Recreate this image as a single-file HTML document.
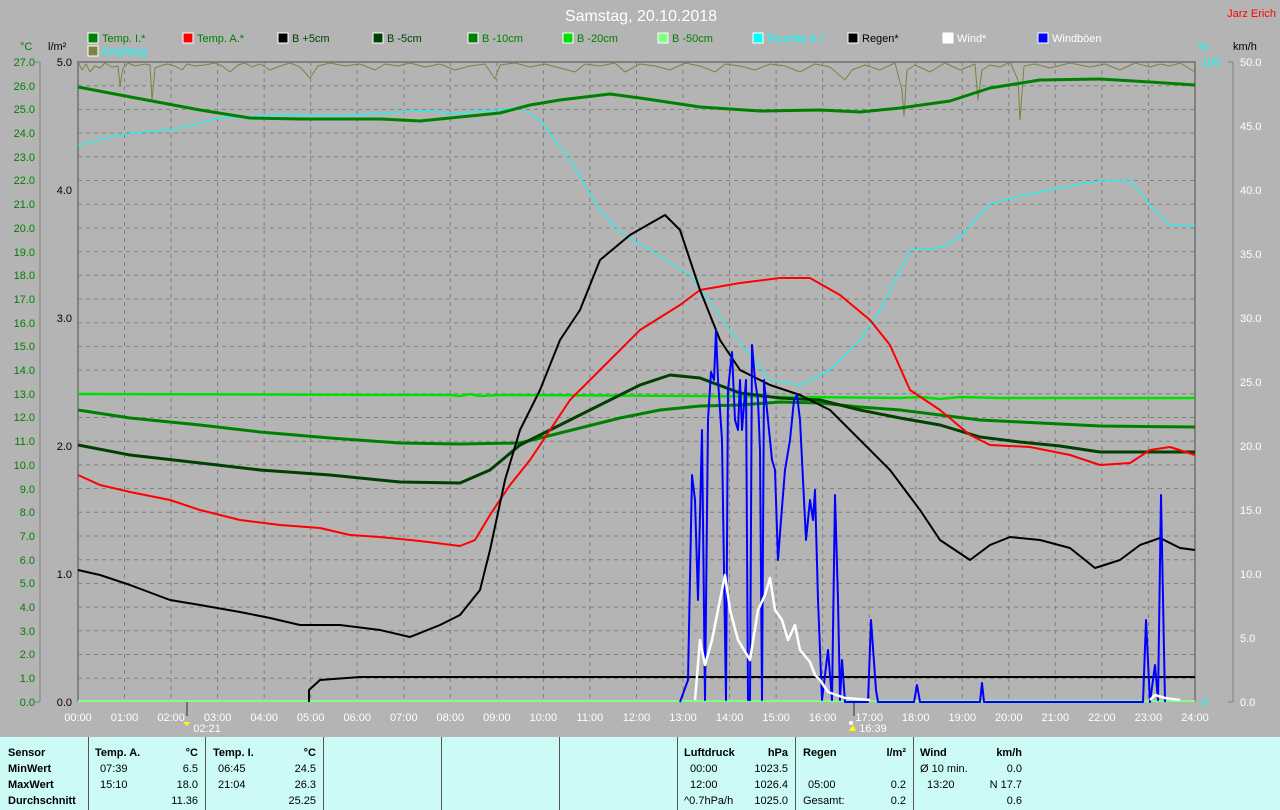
<!DOCTYPE html>
<html><head><meta charset="utf-8"><style>
html,body{margin:0;padding:0;background:#b4b4b4;}
svg{display:block;font-family:"Liberation Sans",sans-serif;}
</style></head><body>
<svg width="1280" height="810" viewBox="0 0 1280 810" xmlns="http://www.w3.org/2000/svg">
<rect width="1280" height="810" fill="#b4b4b4"/>
<text x="641" y="21" font-size="16" fill="#fff" text-anchor="middle">Samstag, 20.10.2018</text>
<text x="1276" y="17" font-size="11" fill="#f00" text-anchor="end">Jarz Erich</text>
<g font-size="11">
<rect x="88" y="33" width="10" height="10" fill="#008000" stroke="#fff"/><text x="102" y="42" fill="#008000">Temp. I.*</text>
<rect x="183" y="33" width="10" height="10" fill="#f00" stroke="#fff"/><text x="197" y="42" fill="#008000">Temp. A.*</text>
<rect x="278" y="33" width="10" height="10" fill="#000" stroke="#fff"/><text x="292" y="42" fill="#004000">B +5cm</text>
<rect x="373" y="33" width="10" height="10" fill="#004000" stroke="#fff"/><text x="387" y="42" fill="#004000">B -5cm</text>
<rect x="468" y="33" width="10" height="10" fill="#008000" stroke="#fff"/><text x="482" y="42" fill="#008000">B -10cm</text>
<rect x="563" y="33" width="10" height="10" fill="#00e000" stroke="#fff"/><text x="577" y="42" fill="#008000">B -20cm</text>
<rect x="658" y="33" width="10" height="10" fill="#80ff80" stroke="#fff"/><text x="672" y="42" fill="#008000">B -50cm</text>
<rect x="753" y="33" width="10" height="10" fill="#0ff" stroke="#fff"/><text x="767" y="42" fill="#0ff">Feuchte A.*</text>
<rect x="848" y="33" width="10" height="10" fill="#000" stroke="#fff"/><text x="862" y="42" fill="#000">Regen*</text>
<rect x="943" y="33" width="10" height="10" fill="#fff" stroke="#fff"/><text x="957" y="42" fill="#fff">Wind*</text>
<rect x="1038" y="33" width="10" height="10" fill="#00f" stroke="#fff"/><text x="1052" y="42" fill="#fff">Windböen</text>
<rect x="88" y="46" width="10" height="10" fill="#808040" stroke="#fff"/><text x="102" y="55" fill="#0ff">Empfang</text>
<text x="20" y="50" fill="#008000">°C</text><text x="48" y="50" fill="#000">l/m²</text>
<text x="1198" y="50" fill="#0ff">%</text><text x="1233" y="50" fill="#000">km/h</text>
</g>
<!-- grid -->
<g stroke="#808080" stroke-dasharray="4,4" stroke-width="1">
<path d="M78 85.7H1195M78 109.4H1195M78 133.1H1195M78 156.8H1195M78 180.5H1195M78 204.2H1195M78 227.9H1195M78 251.6H1195M78 275.3H1195M78 299H1195M78 322.7H1195M78 346.4H1195M78 370.1H1195M78 393.8H1195M78 417.5H1195M78 441.2H1195M78 464.9H1195M78 488.6H1195M78 512.3H1195M78 536H1195M78 559.7H1195M78 583.4H1195M78 607.1H1195M78 630.8H1195M78 654.5H1195M78 678.2H1195"/>
<path d="M124.5 62V702M171.1 62V702M217.6 62V702M264.2 62V702M310.7 62V702M357.2 62V702M403.8 62V702M450.3 62V702M496.9 62V702M543.4 62V702M589.9 62V702M636.5 62V702M683 62V702M729.6 62V702M776.1 62V702M822.6 62V702M869.2 62V702M915.7 62V702M962.3 62V702M1008.8 62V702M1055.3 62V702M1101.9 62V702M1148.4 62V702"/>
</g>
<path d="M78 702V62H1195V702" fill="none" stroke="#808080" stroke-width="2"/>
<path d="M40 62V702M1233 62V702" stroke="#808080"/>
<g stroke="#808080"><path d="M35 62h5M35 702h5M1228 62h5M1228 702h5"/></g>
<!-- left labels -->
<g font-size="11" fill="#008000" text-anchor="end">
<text x="35" y="66">27.0</text><text x="35" y="90">26.0</text><text x="35" y="113">25.0</text><text x="35" y="137">24.0</text><text x="35" y="161">23.0</text><text x="35" y="184">22.0</text><text x="35" y="208">21.0</text><text x="35" y="232">20.0</text><text x="35" y="256">19.0</text><text x="35" y="279">18.0</text><text x="35" y="303">17.0</text><text x="35" y="327">16.0</text><text x="35" y="350">15.0</text><text x="35" y="374">14.0</text><text x="35" y="398">13.0</text><text x="35" y="421">12.0</text><text x="35" y="445">11.0</text><text x="35" y="469">10.0</text><text x="35" y="493">9.0</text><text x="35" y="516">8.0</text><text x="35" y="540">7.0</text><text x="35" y="564">6.0</text><text x="35" y="587">5.0</text><text x="35" y="611">4.0</text><text x="35" y="635">3.0</text><text x="35" y="658">2.0</text><text x="35" y="682">1.0</text><text x="35" y="706">0.0</text>
</g>
<g font-size="11" fill="#000" text-anchor="end">
<text x="72" y="66">5.0</text><text x="72" y="194">4.0</text><text x="72" y="322">3.0</text><text x="72" y="450">2.0</text><text x="72" y="578">1.0</text><text x="72" y="706">0.0</text>
</g>
<g font-size="11" fill="#0ff"><text x="1202" y="66">100</text><text x="1202" y="706">0</text></g>
<g font-size="11" fill="#fff">
<text x="1240" y="66">50.0</text><text x="1240" y="130">45.0</text><text x="1240" y="194">40.0</text><text x="1240" y="258">35.0</text><text x="1240" y="322">30.0</text><text x="1240" y="386">25.0</text><text x="1240" y="450">20.0</text><text x="1240" y="514">15.0</text><text x="1240" y="578">10.0</text><text x="1240" y="642">5.0</text><text x="1240" y="706">0.0</text>
</g>
<!-- time labels -->
<g font-size="11" fill="#fff" text-anchor="middle">
<text x="78" y="721">00:00</text><text x="124.5" y="721">01:00</text><text x="171.1" y="721">02:00</text><text x="217.6" y="721">03:00</text><text x="264.2" y="721">04:00</text><text x="310.7" y="721">05:00</text><text x="357.2" y="721">06:00</text><text x="403.8" y="721">07:00</text><text x="450.3" y="721">08:00</text><text x="496.9" y="721">09:00</text><text x="543.4" y="721">10:00</text><text x="589.9" y="721">11:00</text><text x="636.5" y="721">12:00</text><text x="683" y="721">13:00</text><text x="729.6" y="721">14:00</text><text x="776.1" y="721">15:00</text><text x="822.6" y="721">16:00</text><text x="869.2" y="721">17:00</text><text x="915.7" y="721">18:00</text><text x="962.3" y="721">19:00</text><text x="1008.8" y="721">20:00</text><text x="1055.3" y="721">21:00</text><text x="1101.9" y="721">22:00</text><text x="1148.4" y="721">23:00</text><text x="1195" y="721">24:00</text>
<text x="207" y="732">02:21</text><text x="873" y="732">16:39</text>
</g>
<path d="M187 700V716M854 700V716" stroke="#707070" stroke-width="2"/>
<path d="M183 722l4 4l3-4z" fill="#ff0"/><path d="M849 731l4-6l3 6z" fill="#ff0"/><circle cx="851" cy="723" r="2" fill="#fff"/>
<!-- data -->
<g fill="none" stroke-linejoin="round">
<polyline stroke="#808040" stroke-width="1" points="78,62 82,70 86,64 90,72 95,66 100,68 105,63 112,67 118,66 120,86 123,68 128,63 135,66 145,64 150,65 152,100 155,68 160,66 167,64 175,66 182,70 187,64 195,66 205,65 215,63 222,66 230,72 238,65 245,63 252,67 260,64 270,70 280,66 290,63 300,67 310,78 318,66 330,63 345,66 360,64 375,70 385,64 398,66 410,63 425,67 440,64 455,70 470,66 485,64 495,79 500,65 515,63 530,67 545,64 560,68 575,72 585,64 600,66 615,63 625,72 640,64 655,66 670,70 685,63 700,66 715,72 725,64 740,66 755,70 770,64 785,66 800,72 815,64 830,67 845,80 852,70 865,65 880,70 895,63 902,90 904,116 907,70 915,65 930,72 945,63 960,70 975,64 978,100 982,70 990,65 1000,67 1010,62 1018,80 1020,120 1024,66 1035,64 1050,68 1070,63 1090,67 1105,64 1120,70 1135,63 1150,67 1160,64 1170,66 1180,63 1195,72"/>
<polyline stroke="#0ff" stroke-width="1" points="78,145 120,135 180,128 220,118 280,115 340,116 380,113 420,111 460,113 520,108 540,120 570,160 600,210 620,232 650,250 690,275 730,330 770,380 800,385 830,370 860,340 880,310 900,270 910,250 940,248 960,237 990,204 1020,196 1060,188 1100,181 1130,180 1150,205 1170,225 1195,225"/>
<polyline stroke="#80ff80" stroke-width="2" points="78,701 1195,701"/>
<polyline stroke="#00e000" stroke-width="2.5" points="78,394 450,395 460,396 470,394 480,396 500,395 700,396 800,397 900,398 920,397 940,399 960,397 1000,398 1195,398"/>
<polyline stroke="#008000" stroke-width="3" points="78,410 130,418 200,425 260,432 330,438 400,443 460,444 520,443 560,433 620,418 660,410 700,406 740,405 780,402 820,403 860,407 900,410 940,415 980,420 1020,422 1060,424 1100,426 1195,427"/>
<polyline stroke="#004000" stroke-width="3" points="78,445 130,455 200,463 260,470 330,475 400,482 460,483 490,470 520,445 560,425 600,405 640,385 670,375 700,378 740,393 780,398 820,400 860,410 900,418 940,425 980,437 1020,442 1060,446 1100,452 1195,452"/>
<polyline stroke="#008000" stroke-width="3" points="78,87 120,95 200,110 250,118 300,119 380,119 420,121 470,116 500,113 530,105 560,100 610,94 640,98 700,107 760,111 820,110 860,112 900,108 950,101 990,88 1040,80 1100,79 1150,82 1195,85"/>
<polyline stroke="#f00" stroke-width="2" points="78,475 100,485 130,492 170,500 200,510 240,520 280,525 320,528 350,535 380,537 420,541 460,546 475,540 490,515 510,485 530,460 550,430 570,400 600,370 640,330 680,305 700,290 740,283 780,278 810,278 840,295 870,320 890,345 910,390 940,410 970,435 990,445 1030,447 1070,455 1100,465 1130,463 1150,450 1170,447 1195,455"/>
<polyline stroke="#000" stroke-width="2" points="78,570 100,575 130,585 170,600 200,605 240,612 270,618 300,625 340,625 380,630 410,637 440,625 460,615 480,590 490,550 505,480 520,430 540,390 560,340 580,310 600,260 630,235 665,215 680,230 700,290 720,340 740,370 770,385 800,395 830,410 860,440 890,470 920,510 940,540 970,560 990,545 1010,537 1040,540 1070,548 1095,568 1120,560 1140,545 1160,538 1180,548 1195,550"/>
<polyline stroke="#000" stroke-width="2" points="309,702 309,690 320,680 360,677 1195,677"/>
<polyline stroke="#00f" stroke-width="2" points="680,702 688,680 692,475 695,500 698,600 702,430 705,700 708,420 711,372 714,380 716,330 718,380 722,440 726,700 728,390 732,352 735,420 738,430 740,380 742,430 746,380 748,700 750,700 752,345 755,380 758,400 760,450 762,700 764,380 768,420 772,460 775,470 778,560 781,520 785,470 790,440 794,400 797,395 800,420 803,480 806,540 810,500 813,520 815,490 818,600 822,700 828,650 832,700 835,495 838,600 840,700 842,660 845,702 868,702 871,620 876,690 878,702 914,702 917,685 920,702 980,702 982,683 984,702 1143,702 1146,620 1150,702 1155,665 1158,700 1161,495 1165,702"/>
<polyline stroke="#fff" stroke-width="2.5" points="695,700 700,640 705,665 712,640 720,600 725,575 730,610 738,640 750,660 758,610 765,595 770,578 775,610 782,620 788,640 795,625 800,650 810,662 815,675 820,680 828,692 845,698 870,700"/>
<polyline stroke="#fff" stroke-width="2.5" points="1150,700 1155,695 1165,698 1180,700"/>
</g>
<!-- table -->
<rect x="0" y="737" width="1280" height="73" fill="#ccfaf6"/>
<g stroke="#555" stroke-width="1"><path d="M88.5 737V810M205.5 737V810M323.5 737V810M441.5 737V810M559.5 737V810M677.5 737V810M795.5 737V810M913.5 737V810"/></g>
<g font-size="11" fill="#000">
<g font-weight="bold"><text x="8" y="756">Sensor</text><text x="8" y="772">MinWert</text><text x="8" y="788">MaxWert</text><text x="8" y="804">Durchschnitt</text>
<text x="95" y="756">Temp. A.</text><text x="198" y="756" text-anchor="end">°C</text>
<text x="213" y="756">Temp. I.</text><text x="316" y="756" text-anchor="end">°C</text>
<text x="684" y="756">Luftdruck</text><text x="788" y="756" text-anchor="end">hPa</text>
<text x="803" y="756">Regen</text><text x="906" y="756" text-anchor="end">l/m²</text>
<text x="920" y="756">Wind</text><text x="1022" y="756" text-anchor="end">km/h</text></g>
<text x="100" y="772">07:39</text><text x="198" y="772" text-anchor="end">6.5</text>
<text x="100" y="788">15:10</text><text x="198" y="788" text-anchor="end">18.0</text>
<text x="198" y="804" text-anchor="end">11.36</text>
<text x="218" y="772">06:45</text><text x="316" y="772" text-anchor="end">24.5</text>
<text x="218" y="788">21:04</text><text x="316" y="788" text-anchor="end">26.3</text>
<text x="316" y="804" text-anchor="end">25.25</text>
<text x="690" y="772">00:00</text><text x="788" y="772" text-anchor="end">1023.5</text>
<text x="690" y="788">12:00</text><text x="788" y="788" text-anchor="end">1026.4</text>
<text x="684" y="804">^0.7hPa/h</text><text x="788" y="804" text-anchor="end">1025.0</text>
<text x="808" y="788">05:00</text><text x="906" y="788" text-anchor="end">0.2</text>
<text x="803" y="804">Gesamt:</text><text x="906" y="804" text-anchor="end">0.2</text>
<text x="920" y="772">Ø 10 min.</text><text x="1022" y="772" text-anchor="end">0.0</text>
<text x="927" y="788">13:20</text><text x="1022" y="788" text-anchor="end">N 17.7</text>
<text x="1022" y="804" text-anchor="end">0.6</text>
</g>
</svg>
</body></html>
